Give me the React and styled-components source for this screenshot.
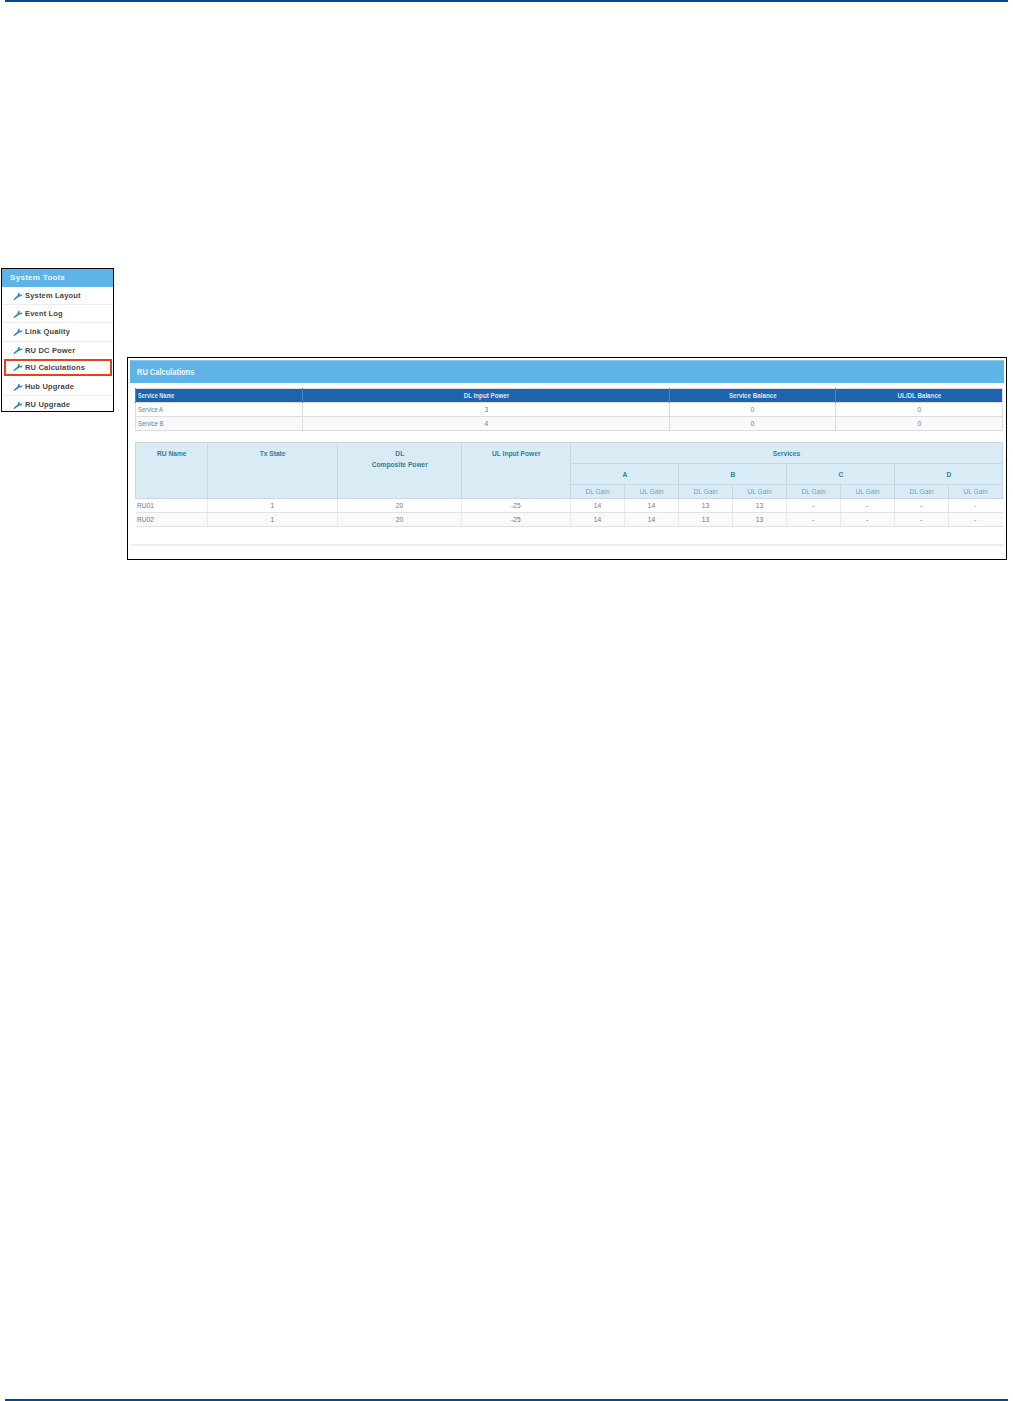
import React from 'react'
import styled, { createGlobalStyle } from 'styled-components'

const tools = ['System Layout', 'Event Log', 'Link Quality', 'RU DC Power', 'RU Calculations', 'Hub Upgrade', 'RU Upgrade']
const services = [
    { name: 'Service A', input: 3 },
    { name: 'Service B', input: 4 },
]
const units = ['RU01', 'RU02']
const gains = ['14', '14', '13', '13', '-', '-', '-', '-']
const groups = ['A', 'B', 'C', 'D']

const WrenchIcon = () => (
    <svg width="10" height="8" viewBox="0 0 10 8">
        <path d="M0.3 7.2 L4.6 3.4 L4.9 1.6 L7 0.6 L6.3 2.2 L7.6 3 L9.6 2.2 L8.7 4.2 L6.4 4.6 L1.4 7.9 Z" fill="#2f86a8" />
    </svg>
)

const App = () => {
    return (
        <Page>
            <GlobalStyle />
            <Rule />
            <Content>
                <Sidebar>
                    <SidebarTitle>System Tools</SidebarTitle>
                    {tools.map((tool) => (
                        <Tool key={tool} $active={tool === 'RU Calculations'}>
                            <WrenchIcon />
                            {tool}
                        </Tool>
                    ))}
                </Sidebar>
                <Panel>
                    <PanelTitle><Narrow $left>RU Calculations</Narrow></PanelTitle>
                    <Tables>
                        <ServiceTable>
                            <colgroup>
                                <col width="167" />
                                <col width="367" />
                                <col width="166" />
                                <col width="167" />
                            </colgroup>
                            <thead>
                                <tr>
                                    <DarkHead $left><Narrow $left $tight>Service Name</Narrow></DarkHead>
                                    <DarkHead><Narrow>DL Input Power</Narrow></DarkHead>
                                    <DarkHead><Narrow>Service Balance</Narrow></DarkHead>
                                    <DarkHead><Narrow>UL/DL Balance</Narrow></DarkHead>
                                </tr>
                            </thead>
                            <tbody>
                                {services.map((service, i) => (
                                    <ServiceRow key={service.name} $odd={i === 1}>
                                        <ServiceCell $left><Narrow $left $tight>{service.name}</Narrow></ServiceCell>
                                        <ServiceCell><Narrow>{service.input}</Narrow></ServiceCell>
                                        <ServiceCell><Narrow>0</Narrow></ServiceCell>
                                        <ServiceCell><Narrow>0</Narrow></ServiceCell>
                                    </ServiceRow>
                                ))}
                            </tbody>
                        </ServiceTable>
                        <UnitTable>
                            <colgroup>
                                <col width="72" />
                                <col width="130" />
                                <col width="124" />
                                <col width="109" />
                                {gains.map((_, i) => <col key={i} width="54" />)}
                            </colgroup>
                            <thead>
                                <TallRow>
                                    <LightHead rowSpan={3}><Narrow>RU Name</Narrow></LightHead>
                                    <LightHead rowSpan={3}><Narrow>Tx State</Narrow></LightHead>
                                    <LightHead rowSpan={3}><Narrow>DL<br />Composite Power</Narrow></LightHead>
                                    <LightHead rowSpan={3}><Narrow>UL Input Power</Narrow></LightHead>
                                    <GroupHead colSpan={8}><Narrow>Services</Narrow></GroupHead>
                                </TallRow>
                                <TallRow>
                                    {groups.map((group) => <GroupHead key={group} colSpan={2}><Narrow>{group}</Narrow></GroupHead>)}
                                </TallRow>
                                <tr>
                                    {gains.map((_, i) => <GainHead key={i}><Narrow>{i % 2 ? 'UL Gain' : 'DL Gain'}</Narrow></GainHead>)}
                                </tr>
                            </thead>
                            <tbody>
                                {units.map((unit, i) => (
                                    <ServiceRow key={unit} $odd={i === 1}>
                                        <UnitCell $left><Narrow $left>{unit}</Narrow></UnitCell>
                                        <UnitCell><Narrow>1</Narrow></UnitCell>
                                        <UnitCell><Narrow>20</Narrow></UnitCell>
                                        <UnitCell><Narrow>-25</Narrow></UnitCell>
                                        {gains.map((gain, j) => <UnitCell key={j}><Narrow>{gain}</Narrow></UnitCell>)}
                                    </ServiceRow>
                                ))}
                            </tbody>
                        </UnitTable>
                    </Tables>
                    <PanelFooter />
                </Panel>
            </Content>
            <Rule />
        </Page>
    )
}

const GlobalStyle = createGlobalStyle`
    body {
        margin: 0;
        background: #fff;
        font-family: "Liberation Sans", Arial, sans-serif;
    }
`

const Page = styled.div`
    width: 1013px;
    height: 1401px;
    display: flex;
    flex-direction: column;
    justify-content: space-between;
    box-sizing: border-box;
`

const Rule = styled.div`
    height: 2px;
    margin: 0 5px;
    background: #004a93;
`

const Content = styled.div`
    flex: 1;
    display: flex;
    align-items: flex-start;
    gap: 13px;
    padding: 266px 0 0 1px;
`

const Sidebar = styled.div`
    width: 113px;
    height: 144px;
    box-sizing: border-box;
    border: 1px solid #000;
    display: flex;
    flex-direction: column;
    overflow: hidden;
`

const SidebarTitle = styled.div`
    height: 18px;
    flex: none;
    padding-left: 8px;
    background: #5fb3e6;
    color: #f2f9fd;
    font-size: 8px;
    font-weight: 700;
    letter-spacing: 0.3px;
    line-height: 18px;
`

const Tool = styled.div`
    height: ${(p) => (p.$active ? '17px' : '18.2px')};
    flex: none;
    box-sizing: border-box;
    display: flex;
    align-items: center;
    gap: 2px;
    padding-left: ${(p) => (p.$active ? '9px' : '11px')};
    margin: ${(p) => (p.$active ? '-0.5px 1px 1.7px 2px' : '0')};
    border-bottom: 1px solid #eee;
    outline: ${(p) => (p.$active ? '2px solid #e8401c' : 'none')};
    outline-offset: -2px;
    color: #444;
    font-size: 7.5px;
    font-weight: 700;
    letter-spacing: 0.18px;
`

const Panel = styled.div`
    width: 880px;
    height: 203px;
    margin-top: 89px;
    padding: 2px;
    box-sizing: border-box;
    border: 1px solid #000;
    display: flex;
    flex-direction: column;
`

const Narrow = styled.span`
    display: inline-block;
    white-space: nowrap;
    transform: scaleX(${(p) => (p.$tight ? 0.74 : 0.83)});
    transform-origin: ${(p) => (p.$left ? 'left' : 'center')};
`

const PanelTitle = styled.div`
    height: 23px;
    flex: none;
    padding-left: 7px;
    background: #5fb3e6;
    border-top: 1px solid #8fc4e4;
    box-sizing: border-box;
    color: #f2f9fd;
    font-size: 9px;
    font-weight: 700;
    line-height: 23px;
`

const Tables = styled.div`
    flex: 1;
    display: flex;
    flex-direction: column;
    gap: 11px;
    padding: 5px 2px 0 5px;
`

const ServiceTable = styled.table`
    width: 867px;
    table-layout: fixed;
    border-collapse: collapse;
    border: 1px solid #ddd;
`

const DarkHead = styled.th`
    height: 13px;
    padding: ${(p) => (p.$left ? '0 0 0 2px' : '0')};
    background: #1e63ad;
    border-left: 1px solid #4f86c0;
    color: #dfe9f4;
    font-size: 7.5px;
    font-weight: 700;
    text-align: ${(p) => (p.$left ? 'left' : 'center')};
`

const ServiceRow = styled.tr`
    background: ${(p) => (p.$odd ? '#f9f9f9' : '#fff')};
`

const ServiceCell = styled.td`
    height: 13px;
    padding: ${(p) => (p.$left ? '0 0 0 2px' : '0')};
    border: 1px solid #ddd;
    color: #4d8aa5;
    font-size: 8px;
    text-align: ${(p) => (p.$left ? 'left' : 'center')};
`

const UnitTable = styled.table`
    width: 867px;
    table-layout: fixed;
    border-collapse: collapse;
    border-top: 1px solid #c9d3d8;
`

const TallRow = styled.tr`
    height: 21px;
`

const LightHead = styled.th`
    padding: 5px 0 0;
    vertical-align: top;
    background: #d9ebf5;
    border: 1px solid #c8d8e0;
    color: #3a7c9a;
    font-size: 8px;
    font-weight: 700;
    line-height: 11px;
`

const GroupHead = styled.th`
    padding: 0;
    background: #d9ebf5;
    border: 1px solid #c8d8e0;
    color: #3a7c9a;
    font-size: 8px;
    font-weight: 700;
`

const GainHead = styled.th`
    height: 13px;
    padding: 0;
    background: #d9ebf5;
    border: 1px solid #c8d8e0;
    color: #6aa5bf;
    font-size: 8px;
    font-weight: 400;
`

const UnitCell = styled.td`
    height: 13px;
    padding: ${(p) => (p.$left ? '0 0 0 1px' : '0')};
    border-bottom: 1px solid #e2e2e2;
    border-left: ${(p) => (p.$left ? 'none' : '1px solid #e8e8e8')};
    color: #777;
    font-size: 8px;
    text-align: ${(p) => (p.$left ? 'left' : 'center')};
`

const PanelFooter = styled.div`
    height: 11px;
    flex: none;
    border-top: 2px solid #eee;
`

export default App
